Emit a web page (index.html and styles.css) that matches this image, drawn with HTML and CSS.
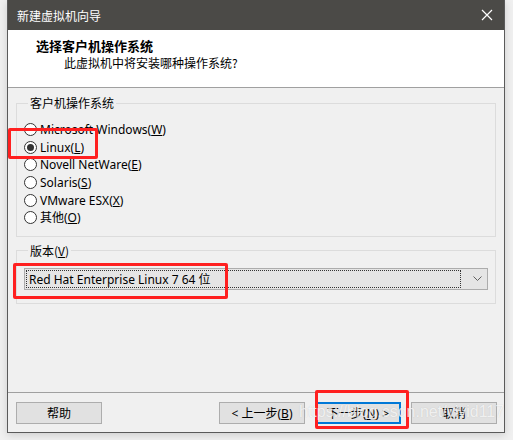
FILE: index.html
```html
<!DOCTYPE html>
<html lang="zh-CN">
<head>
    <meta charset="UTF-8">
    <title>新建虚拟机向导</title>
    <link rel="stylesheet" href="styles.css">
</head>
<body>

<div class="window">
    <div class="titlebar">
        <span class="title-text">新建虚拟机向导</span>
        <svg class="close" width="12" height="12" viewBox="0 0 12 12">
            <path d="M1 1 L11 11 M11 1 L1 11" stroke="#ffffff" stroke-width="1.2" fill="none"/>
        </svg>
    </div>

    <div class="header">
        <div class="header-title">选择客户机操作系统</div>
        <div class="header-sub">此虚拟机中将安装哪种操作系统?</div>
    </div>

    <div class="content">
        <fieldset class="group os-group">
            <legend>客户机操作系统</legend>
            <div class="radio-row"><span class="radio"></span>Microsoft Windows(<u>W</u>)</div>
            <div class="radio-row"><span class="radio checked"></span>Linux(<u>L</u>)</div>
            <div class="radio-row"><span class="radio"></span>Novell NetWare(<u>E</u>)</div>
            <div class="radio-row"><span class="radio"></span>Solaris(<u>S</u>)</div>
            <div class="radio-row"><span class="radio"></span>VMware ESX(<u>X</u>)</div>
            <div class="radio-row"><span class="radio"></span>其他(<u>O</u>)</div>
        </fieldset>

        <fieldset class="group version-group">
            <legend>版本(<u>V</u>)</legend>
            <div class="select">
                <div class="select-value">Red Hat Enterprise Linux 7 64 位</div>
                <svg class="chevron" width="9" height="5" viewBox="0 0 9 5">
                    <path d="M0.5 0.5 L4.5 4.5 L8.5 0.5" stroke="#606060" stroke-width="1" fill="none"/>
                </svg>
            </div>
        </fieldset>
    </div>

    <div class="footer">
        <button class="btn">帮助</button>
        <div class="spacer"></div>
        <button class="btn">&lt; 上一步(<u>B</u>)</button>
        <button class="btn btn-default">下一步(<u>N</u>) &gt;</button>
        <button class="btn">取消</button>
    </div>
</div>

<div class="mark mark-linux"></div>
<div class="mark mark-version"></div>
<div class="mark mark-next"></div>
<div class="watermark">https://blog.csdn.net/vivid117</div>

</body>
</html>
```

FILE: styles.css
```css
body {
    margin: 0;
    background-color: #f0f0f0;
    font-family: "Noto Sans", "Noto Sans CJK SC", sans-serif;
    font-size: 12px;
    color: #000;
    position: relative;
    height: 440px;
    overflow: hidden;
}
u {
    text-decoration: underline;
    text-underline-offset: 1px;
}
.window {
    margin-left: 7px;
    width: 496px;
    height: 432px;
    border: 1px solid #5a5a5a;
    border-top: none;
    background-color: #f0f0f0;
    display: flex;
    flex-direction: column;
    box-shadow: 0 2px 8px rgba(0, 0, 0, 0.15);
}
.titlebar {
    height: 30px;
    background-color: #4b4a47;
    color: #ffffff;
    display: flex;
    align-items: center;
    padding: 0 8px;
    font-family: "Noto Sans CJK SC", sans-serif;
    font-size: 12px;
}
.title-text {
    flex: 1;
    margin-left: 1px;
}
.close {
    margin-right: 3px;
}
.header {
    height: 57px;
    background-color: #ffffff;
    border-bottom: 1px solid #a0a0a0;
    box-sizing: border-box;
    height: 58px;
    padding-top: 7px;
    font-family: "Noto Sans CJK SC", sans-serif;
}
.header-title {
    font-size: 13px;
    font-weight: bold;
    margin-left: 28px;
    line-height: 17px;
}
.header-sub {
    font-size: 12px;
    margin-left: 56px;
    line-height: 16px;
    margin-top: 1px;
}
.content {
    flex: 1;
    padding: 7px 8px 0 8px;
}
.group {
    margin: 0;
    border: 1px solid #dcdcdc;
    padding: 0 7px;
}
.group legend {
    padding: 0 2px;
    margin-left: 4px;
    line-height: 16px;
    font-family: "Noto Sans CJK SC", sans-serif;
}
.os-group {
    padding-top: 10px;
    padding-bottom: 9px;
}
.radio-row {
    display: flex;
    align-items: center;
    height: 17.6px;
    line-height: 17px;
}
.radio {
    width: 11px;
    height: 11px;
    border: 1px solid #333333;
    border-radius: 50%;
    background-color: #ffffff;
    margin-right: 3px;
    position: relative;
    flex-shrink: 0;
}
.radio.checked::after {
    content: "";
    position: absolute;
    left: 2px;
    top: 2px;
    width: 7px;
    height: 7px;
    border-radius: 50%;
    background-color: #333333;
}
.version-group {
    margin-top: 6px;
    padding-top: 9px;
    padding-bottom: 13px;
}
.select {
    height: 22px;
    box-sizing: border-box;
    border: 1px solid #acacac;
    background-color: #e5e5e5;
    display: flex;
    align-items: center;
    padding: 1px;
}
.select-value {
    flex: 1;
    height: 18px;
    line-height: 17px;
    border: 1px dotted #333333;
    box-sizing: border-box;
    padding-left: 2px;
    margin-right: 12px;
}
.chevron {
    margin-right: 4px;
}
.footer {
    height: 40px;
    box-sizing: border-box;
    border-top: 1px solid #a0a0a0;
    padding: 9px 7px 0 8px;
    display: flex;
    align-items: flex-start;
    gap: 10px;
}
.spacer {
    flex: 1;
}
.btn {
    width: 86px;
    height: 22px;
    border: 1px solid #adadad;
    background-color: #e1e1e1;
    font-family: "Noto Sans", "Noto Sans CJK SC", sans-serif;
    font-size: 12px;
    padding: 0;
    color: #000;
}
.btn-default {
    border: 2px solid #0078d7;
}
.mark {
    position: absolute;
    border: 3px solid #ff2020;
    border-radius: 2px;
    box-sizing: border-box;
}
.mark-linux {
    left: 8px;
    top: 128px;
    width: 90px;
    height: 31px;
}
.mark-version {
    left: 13px;
    top: 263px;
    width: 215px;
    height: 36px;
}
.mark-next {
    left: 315px;
    top: 390px;
    width: 94px;
    height: 39px;
}
.watermark {
    position: absolute;
    left: 299px;
    top: 403px;
    font-family: "Liberation Sans", sans-serif;
    font-size: 16px;
    color: rgba(255, 255, 255, 0.75);
    text-shadow: 0 0 1px rgba(120, 120, 120, 0.3);
}
```
